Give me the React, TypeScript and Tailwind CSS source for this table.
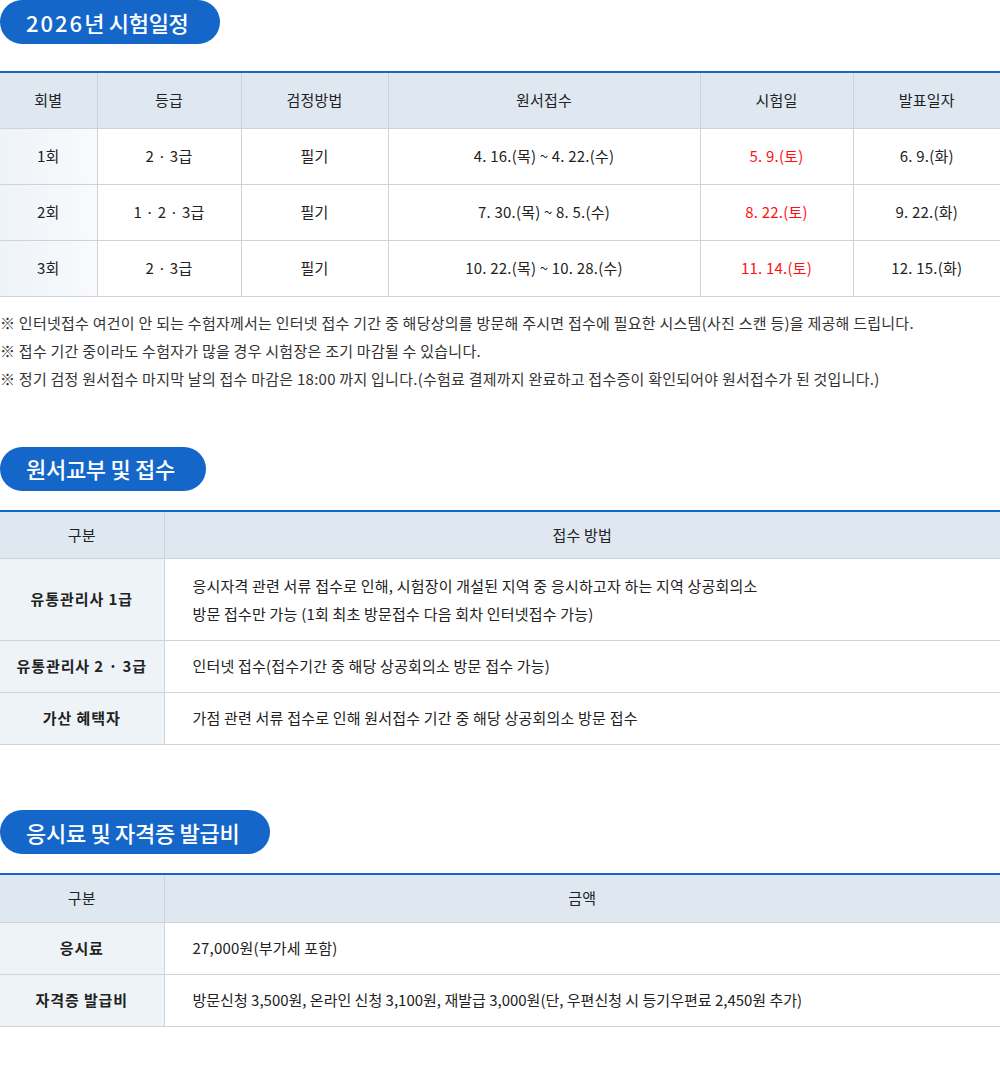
const font = { fontFamily: '"Noto Sans CJK KR", "Noto Sans", sans-serif' };

function Title({ children }: { children: React.ReactNode }) {
  return (
    <h2 className="inline-flex h-[44px] items-center rounded-full bg-[#1467c9] pl-[26px] pr-[31px] text-[22px] font-medium tracking-[-0.3px] text-white">
      {children}
    </h2>
  );
}

const schedule = [
  ['1회', '2 · 3급', '필기', '4. 16.(목) ~ 4. 22.(수)', '5. 9.(토)', '6. 9.(화)'],
  ['2회', '1 · 2 · 3급', '필기', '7. 30.(목) ~ 8. 5.(수)', '8. 22.(토)', '9. 22.(화)'],
  ['3회', '2 · 3급', '필기', '10. 22.(목) ~ 10. 28.(수)', '11. 14.(토)', '12. 15.(화)'],
];

const widths = ['w-[97px]', 'w-[144px]', 'w-[147px]', 'w-[312px]', 'w-[153px]', 'w-[147px]'];

export default function App() {
  return (
    <div className="w-[1000px] bg-white text-[15px] tracking-[0.2px] text-[#222]" style={font}>
      <Title>
        <span className="tracking-[2px]">2026</span>년 시험일정
      </Title>

      <table className="mt-[27px] w-full table-fixed border-collapse border-t-2 border-[#1467c9]">
        <thead>
          <tr className="h-[56px] bg-[#dfe8f1]">
            {['회별', '등급', '검정방법', '원서접수', '시험일', '발표일자'].map((h, i) => (
              <th
                key={h}
                className={`${widths[i]} border-b border-[#cfd3d8] font-normal ${i > 0 ? 'border-l' : ''}`}
              >
                {h}
              </th>
            ))}
          </tr>
        </thead>
        <tbody>
          {schedule.map((row) => (
            <tr key={row[0]} className="h-[56px]">
              {row.map((c, i) => (
                <td
                  key={i}
                  className={`border-b border-[#cfd3d8] text-center ${i > 0 ? 'border-l' : 'bg-gradient-to-r from-[#eef3f8] to-[#f8fafc]'} ${i === 4 ? 'text-[#ff1010]' : ''}`}
                >
                  {c}
                </td>
              ))}
            </tr>
          ))}
        </tbody>
      </table>

      <div className="mt-[12px] text-[15px] leading-[28px] tracking-[0.25px] text-[#333]">
        <p>※ 인터넷접수 여건이 안 되는 수험자께서는 인터넷 접수 기간 중 해당상의를 방문해 주시면 접수에 필요한 시스템(사진 스캔 등)을 제공해 드립니다.</p>
        <p>※ 접수 기간 중이라도 수험자가 많을 경우 시험장은 조기 마감될 수 있습니다.</p>
        <p>※ 정기 검정 원서접수 마지막 날의 접수 마감은 18:00 까지 입니다.(수험료 결제까지 완료하고 접수증이 확인되어야 원서접수가 된 것입니다.)</p>
      </div>

      <div className="mt-[54px]">
        <Title>원서교부 및 접수</Title>
      </div>

      <table className="mt-[19px] w-full table-fixed border-collapse border-t-2 border-[#1467c9]">
        <thead>
          <tr className="h-[48px] bg-[#dfe8f1]">
            <th className="w-[164px] border-b border-[#cfd3d8] font-normal">구분</th>
            <th className="border-b border-l border-[#cfd3d8] font-normal">접수 방법</th>
          </tr>
        </thead>
        <tbody>
          <tr className="h-[82px]">
            <td className="border-b border-[#cfd3d8] bg-[#eef3f8] text-center font-bold tracking-[0.9px]">유통관리사 1급</td>
            <td className="border-b border-l border-[#cfd3d8] pl-[28px] leading-[28px]">
              응시자격 관련 서류 접수로 인해, 시험장이 개설된 지역 중 응시하고자 하는 지역 상공회의소
              <br />
              방문 접수만 가능 (1회 최초 방문접수 다음 회차 인터넷접수 가능)
            </td>
          </tr>
          <tr className="h-[52px]">
            <td className="border-b border-[#cfd3d8] bg-[#eef3f8] text-center font-bold tracking-[0.9px]">유통관리사 2 · 3급</td>
            <td className="border-b border-l border-[#cfd3d8] pl-[28px]">인터넷 접수(접수기간 중 해당 상공회의소 방문 접수 가능)</td>
          </tr>
          <tr className="h-[52px]">
            <td className="border-b border-[#cfd3d8] bg-[#eef3f8] text-center font-bold tracking-[0.9px]">가산 혜택자</td>
            <td className="border-b border-l border-[#cfd3d8] pl-[28px]">가점 관련 서류 접수로 인해 원서접수 기간 중 해당 상공회의소 방문 접수</td>
          </tr>
        </tbody>
      </table>

      <div className="mt-[65px]">
        <Title>응시료 및 자격증 발급비</Title>
      </div>

      <table className="mt-[19px] w-full table-fixed border-collapse border-t-2 border-[#1467c9]">
        <thead>
          <tr className="h-[48px] bg-[#dfe8f1]">
            <th className="w-[164px] border-b border-[#cfd3d8] font-normal">구분</th>
            <th className="border-b border-l border-[#cfd3d8] font-normal">금액</th>
          </tr>
        </thead>
        <tbody>
          <tr className="h-[52px]">
            <td className="border-b border-[#cfd3d8] bg-[#eef3f8] text-center font-bold tracking-[0.9px]">응시료</td>
            <td className="border-b border-l border-[#cfd3d8] pl-[28px]">27,000원(부가세 포함)</td>
          </tr>
          <tr className="h-[52px]">
            <td className="border-b border-[#cfd3d8] bg-[#eef3f8] text-center font-bold tracking-[0.9px]">자격증 발급비</td>
            <td className="border-b border-l border-[#cfd3d8] pl-[28px] tracking-[0px]">방문신청 3,500원, 온라인 신청 3,100원, 재발급 3,000원(단, 우편신청 시 등기우편료 2,450원 추가)</td>
          </tr>
        </tbody>
      </table>
      <div className="h-[59px]" />
    </div>
  );
}
